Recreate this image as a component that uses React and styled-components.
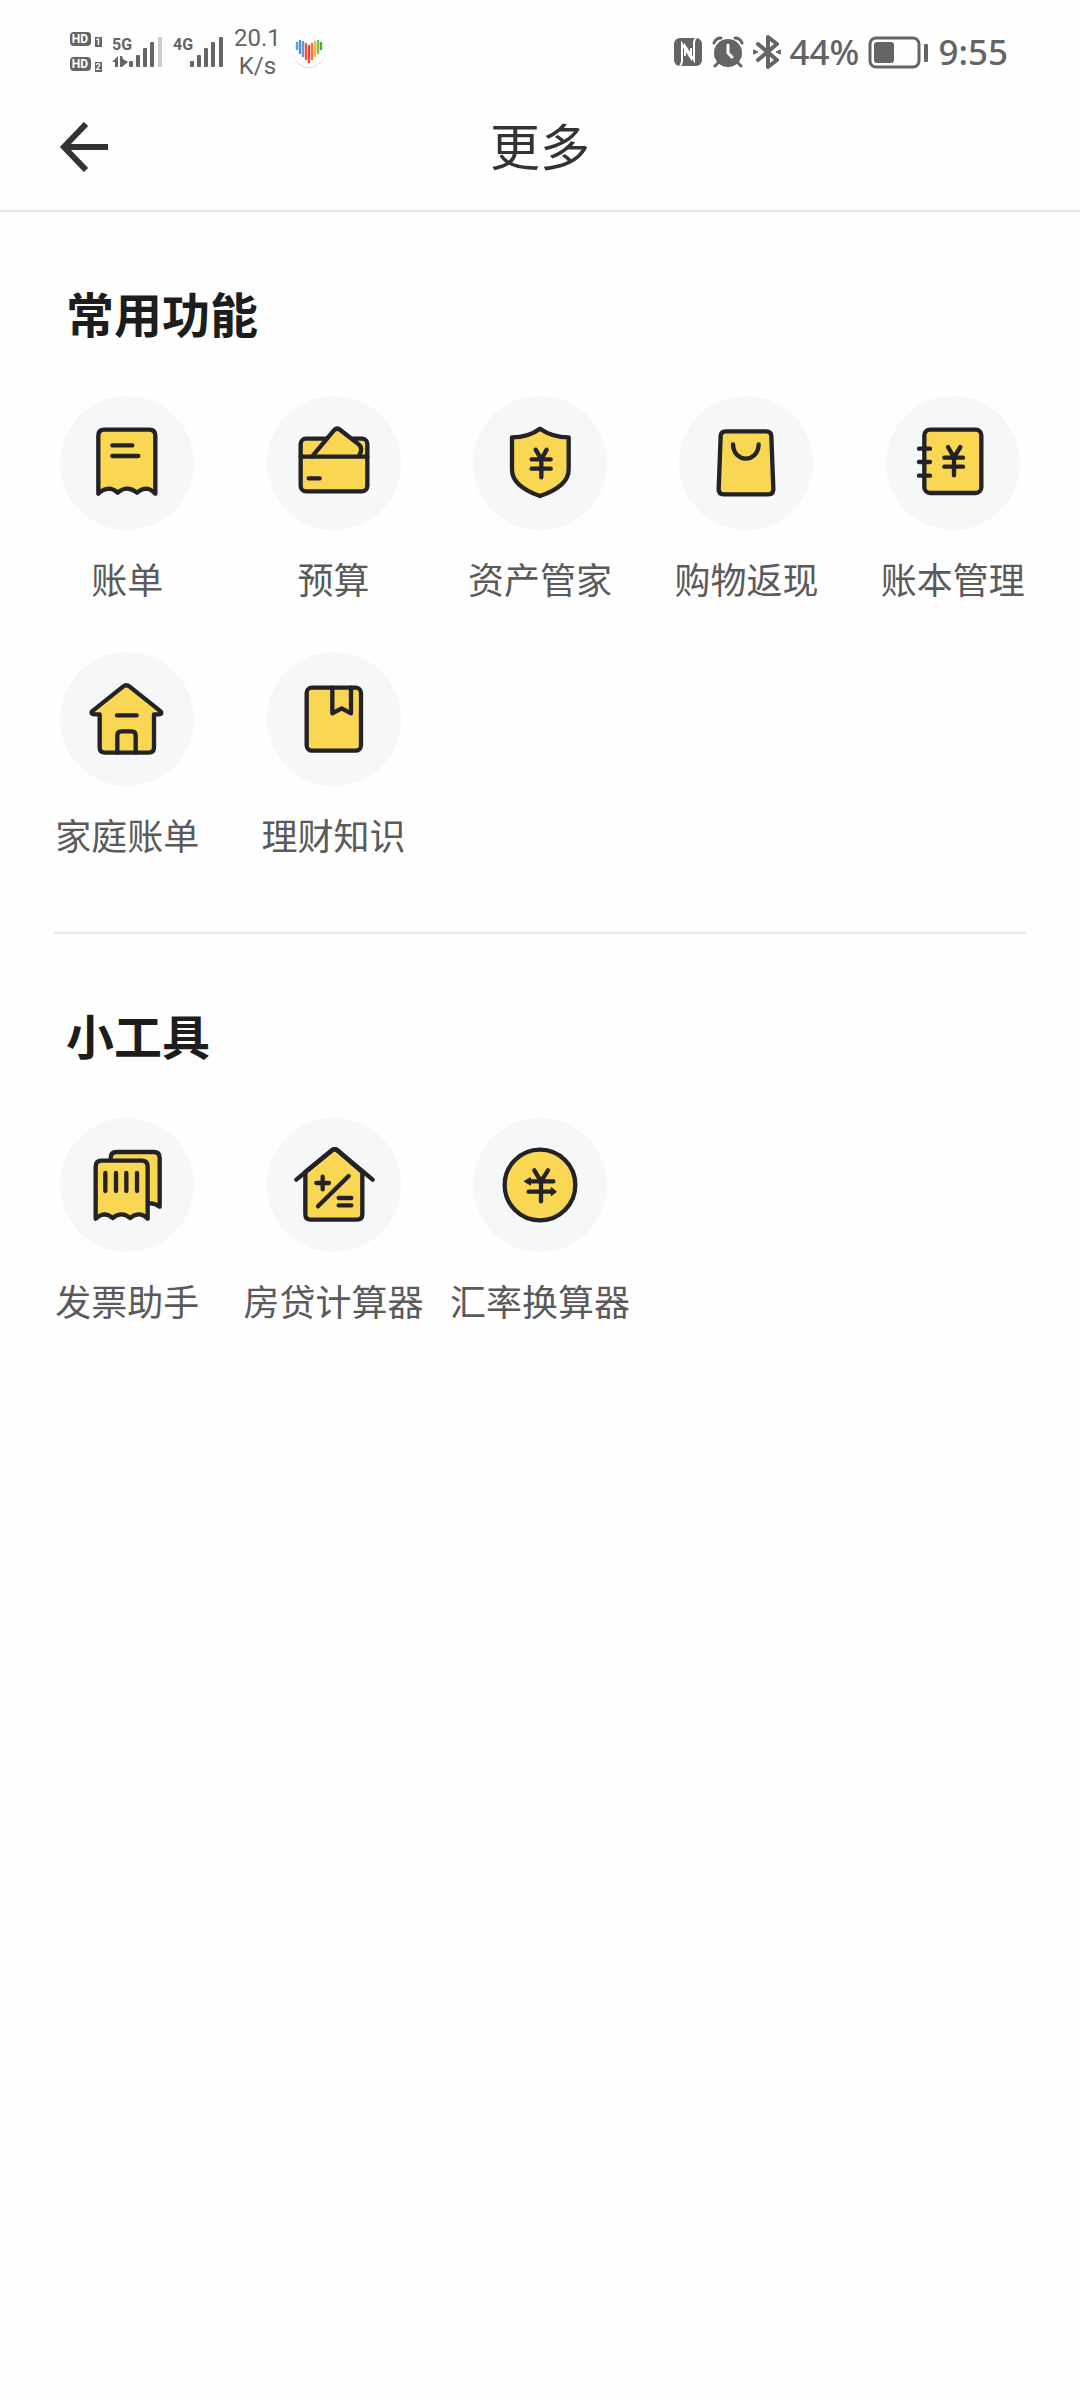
import React from "react";
import styled, { createGlobalStyle } from "styled-components";

const GlobalStyle = createGlobalStyle`
  *, *::before, *::after { box-sizing: border-box; }
  body {
    margin: 0;
    background: #fefefe;
    font-family: "Noto Sans CJK SC", "Noto Sans", sans-serif;
  }
`;

const INK = "#232227";
const GREY = "#646464";

const StatusBar = styled.div`
  display: flex;
  align-items: center;
  justify-content: space-between;
  height: 84px;
  padding: 20px 72px 0 70px;
  color: ${GREY};
  font-family: "Noto Sans", sans-serif;
`;

const StatusGroup = styled.div`
  display: flex;
  align-items: center;
  gap: ${(p) => p.$gap}px;
`;

const Speed = styled.div`
  display: flex;
  flex-direction: column;
  font-family: Roboto, sans-serif;
  font-size: 24px;
  line-height: 28px;
  text-align: center;
`;

const StatusText = styled.span`
  font-size: 35px;
  font-weight: 500;
  line-height: 40px;
`;

const Header = styled.header`
  display: grid;
  grid-template-columns: 1fr auto 1fr;
  align-items: center;
  height: 128px;
  padding: 0 56px;
  border-bottom: 2px solid #e5e5e5;
`;

const BackButton = styled.button`
  display: flex;
  justify-self: start;
  padding: 0;
  border: 0;
  background: none;
  cursor: pointer;
`;

const PageTitle = styled.h1`
  margin: 0;
  padding-bottom: 6px;
  color: #333;
  font-size: 50px;
  font-weight: 400;
  line-height: 56px;
`;

const Section = styled.section`
  padding: 72px 24px 76px;
`;

const SectionTitle = styled.h2`
  margin: 0 0 56px;
  padding: 0 42px;
  color: #1d1d1d;
  font-size: 48px;
  font-weight: 700;
  line-height: 56px;
`;

const Divider = styled.hr`
  height: 2px;
  margin: 0 54px;
  border: 0;
  background: #e8e8e8;
`;

const Grid = styled.div`
  display: grid;
  grid-template-columns: repeat(5, 1fr);
  row-gap: 52px;
`;

const Item = styled.button`
  display: flex;
  flex-direction: column;
  align-items: center;
  gap: 28px;
  padding: 0 0 2px;
  border: 0;
  background: none;
  color: #5a5a5a;
  font-family: inherit;
  font-size: 36px;
  line-height: 40px;
  white-space: nowrap;
  cursor: pointer;
`;

const Disc = styled.span`
  display: block;
  width: 134px;
  height: 134px;
  border-radius: 50%;
  background: #f6f7f9;
`;

const Drawing = styled.svg`
  display: block;
  width: 100%;
  height: 100%;
  fill: none;
  stroke: ${INK};
  stroke-width: 13;
  stroke-linecap: round;
  stroke-linejoin: round;
  .y { fill: #fad753; }
`;

const ICONS = {
  bill: (
    <>
      <path className="y" d="M115 293V119Q115 101 133 101H268Q286 101 286 119V293Q272 278 257 278Q244 279 231 290Q216 278 201 278Q187 278 173 290Q160 278 146 278Q130 279 115 293Z" />
      <path d="M157 148H217M157 180H235" />
    </>
  ),
  budget: (
    <>
      <rect className="y" x="101" y="128" width="200" height="158" rx="16" />
      <path className="y" d="M135 182L200 104Q209 93 220 102L276 146Q289 158 276 178" />
      <path d="M101 182H301M125 247H158" />
    </>
  ),
  assets: (
    <>
      <path className="y" d="M201 98Q166 124 117 124V221Q117 270 201 300Q287 270 287 221V124Q238 124 201 98Z" />
      <path d="M188 161L205 190L221 161M176 190H233M176 218H233M205 190V244" />
    </>
  ),
  shopping: (
    <>
      <path className="y" d="M140 106H262Q276 106 277 120L283 280Q283 295 268 295H134Q119 295 119 280L125 120Q126 106 140 106Z" />
      <path d="M162 145C164 202 237 202 239 145" />
    </>
  ),
  ledger: (
    <>
      <rect className="y" x="115" y="101" width="171" height="190" rx="17" />
      <path d="M99 158H132M99 198H132M99 239H132" />
      <path d="M186 153L204 184L223 153M175 185H231M175 212H231M204 184V238" />
    </>
  ),
  family: (
    <>
      <path className="y" d="M189 104Q199 96 209 104L302 178Q308 186 298 187H282V286Q282 302 266 302H135Q119 302 119 286V187H102Q90 186 96 178Z" />
      <path d="M171 190H230M172 302V250Q172 238 184 238H215Q227 238 227 250V302" />
    </>
  ),
  knowledge: (
    <>
      <rect className="y" x="119" y="107" width="163" height="189" rx="16" />
      <path d="M196 107V184L224 169L252 184V107" />
    </>
  ),
  invoice: (
    <>
      <path className="y" d="M152 127V120Q152 102 170 102H281Q299 102 299 120V266Q286 256 272 256H240Z" />
      <path className="y" d="M107 302V146Q107 128 125 128H245Q263 128 263 146V302Q250 289 237 289Q224 289 210 300Q198 289 184 289Q171 289 158 300Q146 289 132 289Q120 290 107 302Z" />
      <path d="M136 165V219M168 165V219M199 165V219M231 165V219" />
    </>
  ),
  mortgage: (
    <>
      <path className="y" d="M115 162L196 96Q203 91 210 96L286 162V289Q286 305 270 305H131Q115 305 115 289Z" />
      <path d="M88 185L196 96Q203 91 210 96L317 185" />
      <path d="M148 195H186M167 176V214M245 174L153 265M215 240H253M215 262H253" />
    </>
  ),
  exchange: (
    <>
      <circle className="y" cx="201" cy="201" r="106" />
      <path d="M184 157L204 190L225 157M165 190H241M167 221H241M204 190V250" />
      <path fill={INK} strokeWidth="4" d="M155 190L172 180V200ZM249 221L235 210V232Z" />
    </>
  ),
};

const COMMON = [
  ["bill", "账单"],
  ["budget", "预算"],
  ["assets", "资产管家"],
  ["shopping", "购物返现"],
  ["ledger", "账本管理"],
  ["family", "家庭账单"],
  ["knowledge", "理财知识"],
];

const TOOLS = [
  ["invoice", "发票助手"],
  ["mortgage", "房贷计算器"],
  ["exchange", "汇率换算器"],
];

function FeatureGrid({ items }) {
  return (
    <Grid>
      {items.map(([icon, label]) => (
        <Item key={icon} type="button">
          <Disc>
            <Drawing viewBox="0 0 402 402" aria-hidden="true">
              {ICONS[icon]}
            </Drawing>
          </Disc>
          {label}
        </Item>
      ))}
    </Grid>
  );
}

const SignText = styled.text`
  font-family: Roboto, sans-serif;
  font-weight: 700;
`;

function HdIcon() {
  return (
    <svg width="32" height="40" viewBox="0 0 32 40">
      {[1, 2].map((n) => (
        <g key={n} transform={`translate(0 ${(n - 1) * 25})`}>
          <rect width="21" height="14" rx="4" fill={GREY} />
          <SignText x="10" y="11" fontSize="12" fill="#fff" textAnchor="middle">HD</SignText>
          <rect x="25" y="5" width="7" height="10" fill={GREY} />
          <SignText x="28" y="13" fontSize="9" fill="#fff" textAnchor="middle">{n}</SignText>
        </g>
      ))}
    </svg>
  );
}

const BARS = [
  { x: 17, height: 6 },
  { x: 24, height: 12 },
  { x: 31, height: 19 },
  { x: 38, height: 25 },
  { x: 46, height: 30 },
];

function Signal({ label, weak, data }) {
  return (
    <svg width="51" height="32" viewBox="0 0 51 32">
      <SignText x="0" y="14" fontSize="16" fill={GREY}>{label}</SignText>
      {data && (
        <path fill={GREY} d="M6 20V31H3V26H0ZM8 20H10L11 23L16 26L10 31H8Z" />
      )}
      {BARS.map(({ x, height }, i) => (
        <rect key={x} x={x} y={31 - height} width="4" height={height} rx="1" fill={weak && i === 4 ? "#ccc" : GREY} />
      ))}
    </svg>
  );
}

const STRIPES = [
  ["#5ba0e0", 4, 9, 15],
  ["#3f97dc", 7, 7, 19],
  ["#7f8fc8", 10, 8, 22],
  ["#e2574c", 13, 10, 25],
  ["#ea4335", 16, 12, 28],
  ["#f2793a", 19, 10, 25],
  ["#f5b73c", 22, 8, 22],
  ["#7cc142", 25, 7, 19],
  ["#3fae49", 28, 9, 15],
];

function HeartIcon() {
  return (
    <svg width="36" height="36" viewBox="-2 0 36 36">
      <circle cx="16" cy="18" r="16" fill="#dcdcdc" />
      <circle cx="16" cy="17" r="16" fill="#fff" />
      {STRIPES.map(([color, x, top, bottom]) => (
        <path key={x} d={`M${x} ${top}V${bottom}`} stroke={color} strokeWidth="2.4" strokeLinecap="round" />
      ))}
    </svg>
  );
}

function NfcIcon() {
  return (
    <svg width="30" height="30" viewBox="0 0 30 30">
      <rect x="1" y="1" width="28" height="28" rx="6" fill={GREY} />
      <path
        d="M7 29Q9 27 9 24V7L18 21V11M23 1Q21 3 21 6V23L12 9V19"
        fill="none"
        stroke="#fefefe"
        strokeWidth="2"
      />
    </svg>
  );
}

function AlarmIcon() {
  return (
    <svg width="32" height="32" viewBox="0 0 32 32" fill="none" stroke={GREY} strokeWidth="3" strokeLinecap="round">
      <circle cx="16" cy="17" r="14" fill={GREY} stroke="none" />
      <path d="M2 7Q4 2 9 2M30 7Q28 2 23 2M6 27L3 30M26 27L29 30" />
      <path d="M16 9V17L20 21" stroke="#fefefe" />
    </svg>
  );
}

function BluetoothIcon() {
  return (
    <svg width="28" height="34" viewBox="0 0 28 34" fill="none" stroke={GREY} strokeWidth="4" strokeLinejoin="round" strokeLinecap="round">
      <path d="M5 9L24 25L15 32V2L24 9L5 25" />
      <path d="M1 15L5 17L1 19ZM27 15L23 17L27 19Z" fill={GREY} strokeWidth="1" />
    </svg>
  );
}

function BatteryIcon() {
  return (
    <svg width="61" height="33" viewBox="0 0 61 33">
      <rect x="2" y="2" width="49" height="29" rx="6" fill="none" stroke={GREY} strokeWidth="3" />
      <rect x="6" y="6" width="20" height="21" rx="3" fill={GREY} />
      <rect x="56" y="8" width="4" height="18" rx="1" fill={GREY} />
    </svg>
  );
}

export default function App() {
  return (
    <>
      <GlobalStyle />
      <StatusBar>
        <StatusGroup $gap={10}>
          <HdIcon />
          <Signal label="5G" weak data />
          <Signal label="4G" />
          <Speed>
            <span>20.1</span>
            <span>K/s</span>
          </Speed>
          <HeartIcon />
        </StatusGroup>
        <StatusGroup $gap={9}>
          <NfcIcon />
          <AlarmIcon />
          <BluetoothIcon />
          <StatusText>44%</StatusText>
          <BatteryIcon />
          <StatusText>9:55</StatusText>
        </StatusGroup>
      </StatusBar>
      <Header>
        <BackButton type="button" aria-label="返回">
          <svg width="56" height="50" viewBox="0 0 56 50" fill="none" stroke="#333" strokeWidth="6">
            <path d="M52 25H8M30 2L8 25L30 48" />
          </svg>
        </BackButton>
        <PageTitle>更多</PageTitle>
      </Header>
      <main>
        <Section>
          <SectionTitle>常用功能</SectionTitle>
          <FeatureGrid items={COMMON} />
        </Section>
        <Divider />
        <Section>
          <SectionTitle>小工具</SectionTitle>
          <FeatureGrid items={TOOLS} />
        </Section>
      </main>
    </>
  );
}
